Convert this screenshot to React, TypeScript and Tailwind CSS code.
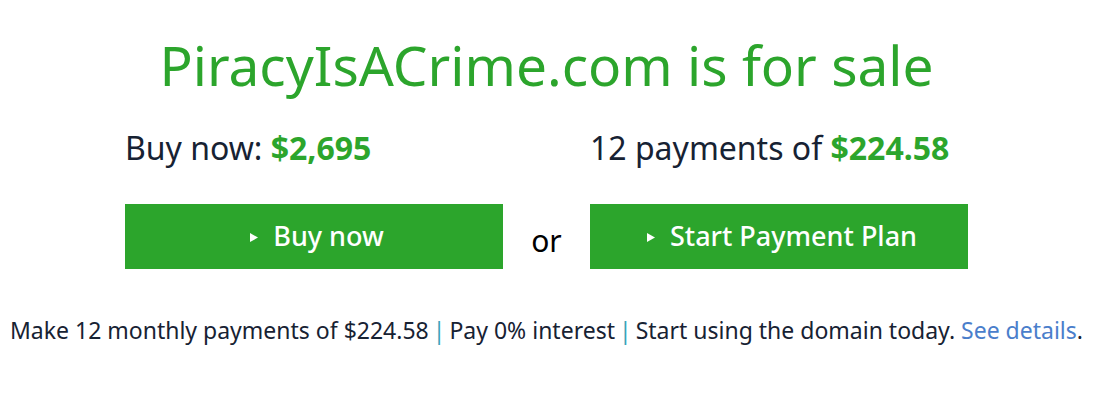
import { type ReactNode } from 'react';

// ── Pieces ────────────────────────────────────────────────────────────────

function PlayButton({ children }: { children: ReactNode }) {
  return (
    <button className="flex h-[65px] w-[378px] items-center justify-center gap-[15px] bg-[#2ca52c] pl-[6px] text-[27px] font-medium text-white">
      <svg width="8" height="9" viewBox="0 0 8 9" className="mt-[2px]">
        <polygon points="0,0 8,4.5 0,9" fill="#ffffff" />
      </svg>
      <span>{children}</span>
    </button>
  );
}

function Pipe() {
  return <span className="mx-[4px] text-[#3aa3ba]">|</span>;
}

// ── Page ──────────────────────────────────────────────────────────────────

export default function App() {
  return (
    <div
      className="min-h-[408px] w-full bg-white pr-[6px] text-[#172233]"
      style={{ fontFamily: '"Noto Sans", "Open Sans", sans-serif' }}
    >
      <div className="flex flex-col items-center pt-[33px]">
        <h1 className="whitespace-nowrap text-[55px] leading-[64px] text-[#2ca52c]">PiracyIsACrime.com is for sale</h1>

        <div className="mt-[31px] flex w-[843px] items-center justify-between">
          <p className="w-[378px] whitespace-nowrap text-[32px] leading-[40px]">
            Buy now: <span className="font-bold text-[#2ca52c]">$2,695</span>
          </p>
          <p className="w-[378px] whitespace-nowrap text-[32px] leading-[40px]">
            12 payments of <span className="font-bold text-[#2ca52c]">$224.58</span>
          </p>
        </div>

        <div className="mt-[36px] flex w-[843px] items-center justify-between">
          <PlayButton>Buy now</PlayButton>
          <span className="mt-[8px] text-[30px] text-black">or</span>
          <PlayButton>Start Payment Plan</PlayButton>
        </div>

        <p className="mt-[47px] whitespace-nowrap text-[23px] leading-[28px]">
          Make 12 monthly payments of $224.58
          <Pipe />
          Pay 0% interest
          <Pipe />
          Start using the domain today. <a className="text-[#4a7ecb]">See details</a>.
        </p>
      </div>
    </div>
  );
}
